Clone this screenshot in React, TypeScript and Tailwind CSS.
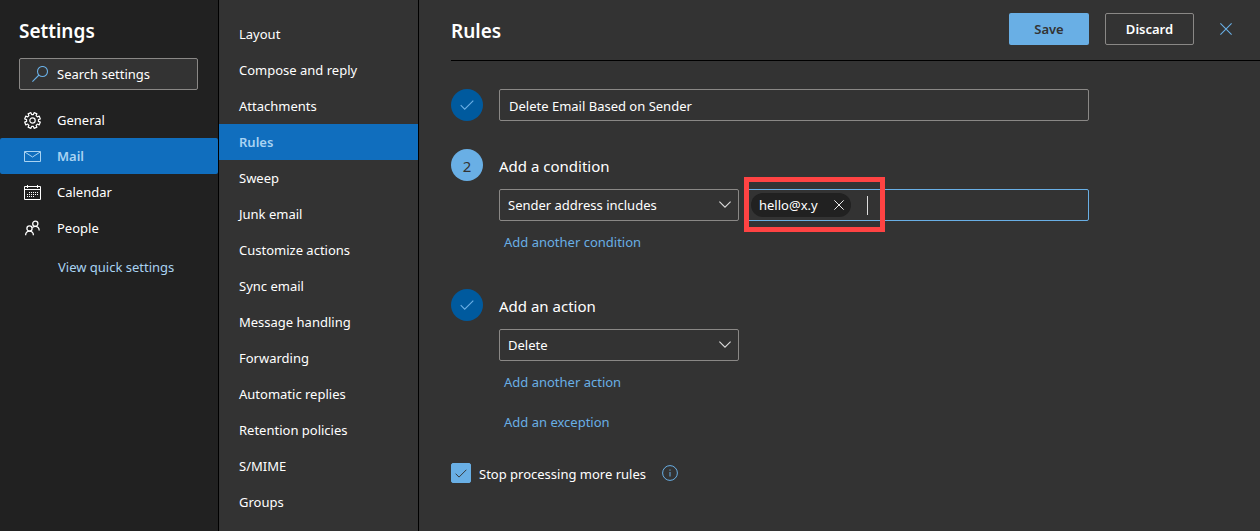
import React, { useState } from 'react';

type IconProps = { className?: string };

function GearIcon({ className }: IconProps) {
  const teeth = Array.from({ length: 8 }, (_, i) => {
    const at = (r: number, deg: number) => {
      const a = ((i * 45 + 22.5 + deg) * Math.PI) / 180;
      return `${(8.5 + r * Math.sin(a)).toFixed(2)} ${(8.5 - r * Math.cos(a)).toFixed(2)}`;
    };
    return `${at(6, -14)} L${at(8, -11)} L${at(8, 11)} L${at(6, 14)}`;
  });
  return (
    <svg viewBox="0 0 17 17" className={className} fill="none" stroke="currentColor" strokeWidth="1.200" strokeLinejoin="round" aria-hidden="true">
      <path d={`M${teeth.join(' L')} Z`} />
      <circle cx="8.500" cy="8.500" r="2.700" />
    </svg>
  );
}

function MailIcon({ className }: IconProps) {
  return (
    <svg viewBox="0 0 17 17" className={className} fill="none" stroke="currentColor" aria-hidden="true">
      <path d="M0.500 3.500h16v10h-16zM0.800 4L8.500 9l7.700-5" />
    </svg>
  );
}

function CalendarIcon({ className }: IconProps) {
  return (
    <svg viewBox="0 0 17 17" className={className} fill="none" stroke="currentColor" aria-hidden="true">
      <path d="M0.500 2.500h16v13h-16zM0.500 5.500h16M3.500 1v3M13.500 1v3" />
      <path d="M5 8.500h10M3 10.500h12M3 12.500h8" strokeDasharray="1 1" />
    </svg>
  );
}

function PeopleIcon({ className }: IconProps) {
  return (
    <svg viewBox="0 0 17 17" className={className} fill="none" stroke="currentColor" strokeWidth="1.300" aria-hidden="true">
      <circle cx="5.500" cy="8.500" r="2.600" />
      <path d="M1.600 15.300c0-2.400 1.700-4.200 3.900-4.200s3.900 1.800 3.900 4.200" />
      <circle cx="11.300" cy="3.700" r="2.600" />
      <path d="M8.400 7.600c.8-.9 1.800-1.300 2.900-1.300 2.200 0 3.900 1.800 3.900 4.200" />
    </svg>
  );
}

function SearchIcon({ className }: IconProps) {
  return (
    <svg viewBox="0 0 16 16" className={className} fill="none" stroke="currentColor" strokeWidth="1.1" aria-hidden="true">
      <circle cx="10.500" cy="5.500" r="5" />
      <path d="M7 9L0.400 15.600" />
    </svg>
  );
}

function CheckIcon({ className }: IconProps) {
  return (
    <svg viewBox="0 0 14 10" className={className} fill="none" stroke="currentColor" strokeWidth="1.1" aria-hidden="true">
      <path d="M0.700 5.200l4 4L13.300 0.600" />
    </svg>
  );
}

function ChevronIcon({ className }: IconProps) {
  return (
    <svg viewBox="0 0 12 7" className={className} fill="none" stroke="currentColor" strokeWidth="1.1" aria-hidden="true">
      <path d="M0.400 0.600L6 6.200l5.600-5.600" />
    </svg>
  );
}

function CloseIcon({ className }: IconProps) {
  return (
    <svg viewBox="0 0 12 12" className={className} fill="none" stroke="currentColor" strokeWidth="1.100" aria-hidden="true">
      <path d="M0.400 0.400l11.200 11.200M11.600 0.400L0.400 11.600" />
    </svg>
  );
}

function InfoIcon({ className }: IconProps) {
  return (
    <svg viewBox="0 0 16 16" className={className} fill="none" stroke="currentColor" aria-hidden="true">
      <circle cx="8" cy="8" r="7.400" />
      <path d="M8 7v4.500M8 4.500v1.200" />
    </svg>
  );
}

const categories = [
  { label: 'General', Icon: GearIcon },
  { label: 'Mail', Icon: MailIcon },
  { label: 'Calendar', Icon: CalendarIcon },
  { label: 'People', Icon: PeopleIcon },
];

const pages = [
  'Layout',
  'Compose and reply',
  'Attachments',
  'Rules',
  'Sweep',
  'Junk email',
  'Customize actions',
  'Sync email',
  'Message handling',
  'Forwarding',
  'Automatic replies',
  'Retention policies',
  'S/MIME',
  'Groups',
];

function StepBadge({ number }: { number?: number }) {
  return number ? (
    <span className="flex size-8 shrink-0 items-center justify-center rounded-full bg-[#69afe5] pt-0.5 text-[15px] text-[#333333]">
      {number}
    </span>
  ) : (
    <span className="flex size-8 shrink-0 items-center justify-center rounded-full bg-[#005a9e] text-[#69afe5]">
      <CheckIcon className="h-[10px] w-[14px]" />
    </span>
  );
}

function Dropdown({ label, options }: { label: string; options: string[] }) {
  return (
    <div className="relative w-60 shrink-0">
      <select
        aria-label={label}
        className="block h-8 w-full appearance-none rounded-xs border border-[#8a8886] bg-[#333333] pt-0.5 pr-8 pl-2 text-white outline-none"
      >
        {options.map((option) => (
          <option key={option}>{option}</option>
        ))}
      </select>
      <ChevronIcon className="pointer-events-none absolute top-3 right-2 h-[7px] w-3 text-[#dddddd]" />
    </div>
  );
}

function AddLink({ children }: { children: string }) {
  return (
    <a href="#" className="block w-fit pl-[5px] leading-5 text-[#69afe5] hover:underline">
      {children}
    </a>
  );
}

export default function App() {
  const [name, setName] = useState('Delete Email Based on Sender');
  const [stop, setStop] = useState(true);

  return (
    <div className="flex min-h-screen bg-[#333333] font-['Noto_Sans','Open_Sans',sans-serif] text-[13px] text-white">
      <aside className="w-[219px] shrink-0 border-r border-black bg-[#212121]">
        <h1 className="px-[19px] pt-4 text-[19px] leading-[30px] font-semibold">Settings</h1>
        <div className="mx-[19px] mt-3 flex h-8 w-[179px] items-center gap-[9px] rounded-xs border border-[#8a8886] bg-[#333333] pl-3">
          <SearchIcon className="size-4 shrink-0 text-[#69afe5]" />
          <input
            type="search"
            aria-label="Search settings"
            placeholder="Search settings"
            className="min-w-0 flex-1 bg-transparent pt-0.5 outline-none placeholder:text-white"
          />
        </div>
        <nav aria-label="Settings categories" className="mt-3">
          {categories.map(({ label, Icon }) => (
            <a
              key={label}
              href="#"
              className={
                label === 'Mail'
                  ? 'flex h-9 items-center gap-4 rounded-xs bg-[#106ebe] pl-6 font-semibold text-[#a9d3f2]'
                  : 'flex h-9 items-center gap-4 pl-6'
              }
            >
              <Icon className="size-[17px]" />
              <span className="pt-0.5">{label}</span>
            </a>
          ))}
        </nav>
        <a href="#" className="mt-[11px] ml-[58px] block w-fit leading-5 text-[#a9d3f2]">
          View quick settings
        </a>
      </aside>

      <nav aria-label="Mail settings" className="w-[200px] shrink-0 border-r border-black pt-4">
        {pages.map((page) => (
          <a
            key={page}
            href="#"
            className={
              page === 'Rules'
                ? 'flex h-9 items-center bg-[#106ebe] pt-0.5 pl-5 font-semibold text-[#a9d3f2]'
                : 'flex h-9 items-center pt-0.5 pl-5'
            }
          >
            {page}
          </a>
        ))}
      </nav>

      <main className="min-w-0 flex-1 pl-8">
        <header className="flex h-[61px] items-start border-b border-black pt-[13px] pr-[19px]">
          <h2 className="flex-1 pt-[3px] text-[19px] leading-[30px] font-semibold">Rules</h2>
          <div className="flex gap-4">
            <button type="button" className="h-8 w-20 rounded-xs bg-[#69afe5] pt-0.5 font-semibold text-[#333333]">
              Save
            </button>
            <button type="button" className="h-8 w-[89px] rounded-xs border border-[#8a8886] pt-0.5 font-semibold">
              Discard
            </button>
            <button type="button" aria-label="Close" className="flex h-8 w-[31px] items-center justify-center text-[#69afe5]">
              <CloseIcon className="size-3" />
            </button>
          </div>
        </header>

        <form className="pt-7 pr-8" onSubmit={(e) => e.preventDefault()}>
          <div className="flex gap-4">
            <StepBadge />
            <input
              aria-label="Rule name"
              value={name}
              onChange={(e) => setName(e.target.value)}
              className="h-8 max-w-[590px] min-w-0 flex-1 rounded-xs border border-[#8a8886] bg-transparent pt-px pl-[9px] outline-none"
            />
          </div>

          <section className="mt-7 flex gap-4">
            <StepBadge number={2} />
            <div className="max-w-[590px] min-w-0 flex-1">
              <h3 className="pt-[2px] text-[15px] leading-[30px]">Add a condition</h3>
              <div className="mt-2 flex gap-2">
                <Dropdown label="Condition" options={['Sender address includes', 'From', 'Subject includes']} />
                <div className="relative flex h-8 min-w-0 flex-1 items-center rounded-xs border border-[#69afe5] pl-[3px]">
                  <span className="flex h-6 w-[100px] shrink-0 items-center justify-between rounded-full bg-[#212121] pr-[7px] pl-2">
                    <span className="pt-0.5">hello@x.y</span>
                    <button type="button" aria-label="Remove hello@x.y">
                      <CloseIcon className="size-[10px]" />
                    </button>
                  </span>
                  <span aria-hidden="true" className="ml-4 h-[19px] w-px shrink-0 bg-[#dddddd]" />
                  <input aria-label="Sender address" className="h-6 min-w-0 flex-1 bg-transparent outline-none" />
                  <div className="pointer-events-none absolute -top-[13px] -left-1 h-[55px] w-[141px] border-5 border-[#ff4343]" />
                </div>
              </div>
              <div className="mt-[11px]">
                <AddLink>Add another condition</AddLink>
              </div>
            </div>
          </section>

          <section className="mt-[37px] flex gap-4">
            <StepBadge />
            <div className="max-w-[590px] min-w-0 flex-1">
              <h3 className="pt-[2px] text-[15px] leading-[30px]">Add an action</h3>
              <div className="mt-2">
                <Dropdown label="Action" options={['Delete', 'Move to', 'Mark as read']} />
              </div>
              <div className="mt-[11px] flex flex-col gap-5">
                <AddLink>Add another action</AddLink>
                <AddLink>Add an exception</AddLink>
              </div>
            </div>
          </section>

          <div className="mt-[30px] flex items-center">
            <label className="flex items-center gap-2">
              <span className="relative flex size-5 items-center justify-center">
                <input
                  type="checkbox"
                  checked={stop}
                  onChange={(e) => setStop(e.target.checked)}
                  className="peer size-5 appearance-none rounded-xs border border-[#8a8886] checked:border-[#69afe5] checked:bg-[#69afe5]"
                />
                <CheckIcon className="pointer-events-none absolute hidden h-[9px] w-3 text-[#333333] peer-checked:block" />
              </span>
              <span className="pt-0.5 leading-5">Stop processing more rules</span>
            </label>
            <button type="button" aria-label="More information" className="ml-4 text-[#69afe5]">
              <InfoIcon className="size-4" />
            </button>
          </div>
        </form>
      </main>
    </div>
  );
}
